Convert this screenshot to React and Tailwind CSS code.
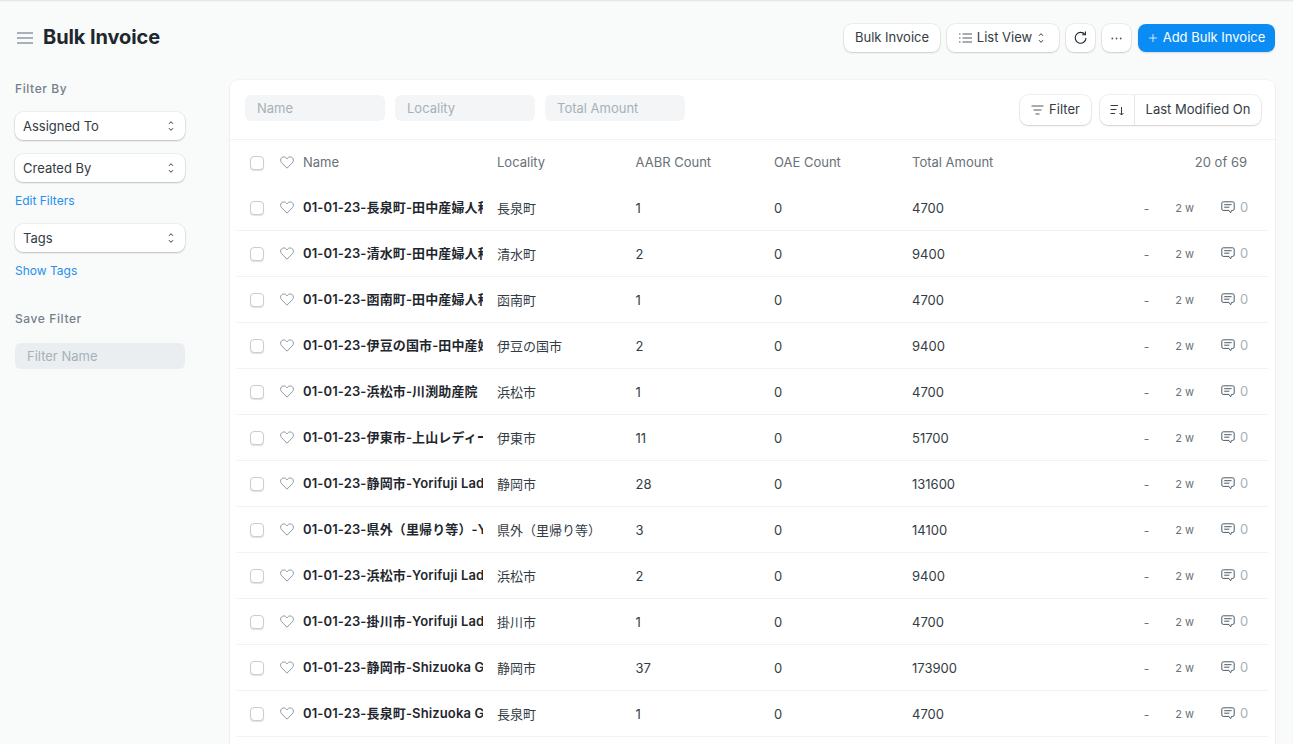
import React from "react";

const rows = [
  ["01-01-23-長泉町-田中産婦人科", "長泉町", "1", "4700"],
  ["01-01-23-清水町-田中産婦人科", "清水町", "2", "9400"],
  ["01-01-23-函南町-田中産婦人科", "函南町", "1", "4700"],
  ["01-01-23-伊豆の国市-田中産婦", "伊豆の国市", "2", "9400"],
  ["01-01-23-浜松市-川渕助産院", "浜松市", "1", "4700"],
  ["01-01-23-伊東市-上山レディー", "伊東市", "11", "51700"],
  ["01-01-23-静岡市-Yorifuji Ladi", "静岡市", "28", "131600"],
  ["01-01-23-県外（里帰り等）-Yo", "県外（里帰り等）", "3", "14100"],
  ["01-01-23-浜松市-Yorifuji Ladi", "浜松市", "2", "9400"],
  ["01-01-23-掛川市-Yorifuji Ladi", "掛川市", "1", "4700"],
  ["01-01-23-静岡市-Shizuoka Ge", "静岡市", "37", "173900"],
  ["01-01-23-長泉町-Shizuoka Ge", "長泉町", "1", "4700"],
];

const Updown = ({ className = "" }) => (
  <svg width="8" height="14" viewBox="0 0 8 14" fill="none" stroke="#333c44" strokeWidth="1" className={className}>
    <path d="M2 4.8 L4 2.7 L6 4.8" />
    <path d="M2 9.2 L4 11.3 L6 9.2" />
  </svg>
);

const Heart = () => (
  <svg width="14" height="13" viewBox="0 0 14 13" fill="none" stroke="#8d99a6" strokeWidth="1" className="shrink-0 block">
    <path d="M7 12.2 L1.7 6.8 C0.2 5.2 0.3 3 1.6 1.8 C3 0.5 5.3 0.7 6.3 2 L7 2.9 L7.7 2 C8.7 0.7 11 0.5 12.4 1.8 C13.7 3 13.8 5.2 12.3 6.8 Z" strokeLinejoin="round" />
  </svg>
);

const Checkbox = () => (
  <span className="w-[14px] h-[14px] rounded-[4px] bg-white border border-[#c8ced4] shadow-[0_1px_1px_rgba(0,0,0,0.12)] shrink-0 block" />
);

const Comment = () => (
  <svg width="14" height="13" viewBox="0 0 14 13" fill="none" stroke="#4c5a67" strokeWidth="1" className="shrink-0 block">
    <path d="M2.2 0.8 H11.8 C12.6 0.8 13.2 1.4 13.2 2.2 V8 C13.2 8.8 12.6 9.4 11.8 9.4 H10.6 L9.6 11.8 L8 9.4 H2.2 C1.4 9.4 0.8 8.8 0.8 8 V2.2 C0.8 1.4 1.4 0.8 2.2 0.8 Z" strokeLinejoin="round" />
    <path d="M3.6 3.7 H10.2 M3.6 6.2 H8" strokeLinecap="round" />
  </svg>
);

const Select = ({ label }) => (
  <div className="h-[28px] w-full bg-white rounded-lg shadow-[0_0_0_0.5px_rgba(0,0,0,0.09),0_1px_2px_rgba(0,0,0,0.2)] flex items-center justify-between pl-[8px] pr-[10px] text-[13px] text-[#333c44]">
    <span className="mt-[1px]">{label}</span>
    <Updown />
  </div>
);

const Button = ({ children, className = "" }) => (
  <div className={`bg-white rounded-lg shadow-[0_0_0_0.5px_rgba(0,0,0,0.1),0_1px_2px_rgba(0,0,0,0.14)] flex items-center justify-center text-[13px] text-[#333c44] ${className}`}>
    {children}
  </div>
);

const Input = ({ label, className = "" }) => (
  <div className={`h-[26px] rounded-md flex items-center px-[12px] text-[13px] text-[#a6b1b9] ${className}`}>
    <span className="mt-[1px]">{label}</span>
  </div>
);

export default function App() {
  return (
    <div className="h-screen overflow-hidden flex flex-col bg-[#f9fafa] shadow-[inset_0_2px_2px_-1px_rgba(0,0,0,0.1)]" style={{ fontFamily: '"Inter", "Noto Sans CJK JP", sans-serif' }}>
      <header className="h-[80px] shrink-0 flex items-start justify-between pl-[17px] pr-[18px] pt-[24px]">
        <div className="flex items-center gap-[10px] h-[26px]">
          <svg width="16" height="12" viewBox="0 0 16 12" stroke="#8d99a6" strokeWidth="1.5" fill="none" className="mt-[1px]">
            <path d="M0 1 H16 M0 6 H16 M0 11 H16" />
          </svg>
          <h1 className="text-[20px] font-bold text-[#1f272e] tracking-[-0.1px]">Bulk Invoice</h1>
        </div>
        <div className="flex items-center gap-[7px]">
          <Button className="h-[28px] w-[96px]">Bulk Invoice</Button>
          <Button className="h-[28px] w-[112px] gap-[5px] pr-[2px]">
            <svg width="13" height="10" viewBox="0 0 13 10" stroke="#4c5a67" strokeWidth="1" fill="none">
              <path d="M3.5 1 H13 M3.5 5 H13 M3.5 9 H13 M0 1 H1.5 M0 5 H1.5 M0 9 H1.5" />
            </svg>
            <span>List View</span>
            <Updown />
          </Button>
          <Button className="h-[28px] w-[29px]">
            <svg width="13" height="14" viewBox="0 0 13 14" stroke="#1f272e" strokeWidth="1.1" fill="none">
              <path d="M10.8 3.4 A5.4 5.4 0 1 0 12 7" />
              <path d="M11.4 0.6 V3.8 H8.2" />
            </svg>
          </Button>
          <Button className="h-[28px] w-[29px]">
            <svg width="11" height="3" viewBox="0 0 11 3" fill="#4c5a67">
              <circle cx="1.3" cy="1.5" r="0.9" />
              <circle cx="5.5" cy="1.5" r="0.9" />
              <circle cx="9.7" cy="1.5" r="0.9" />
            </svg>
          </Button>
          <div className="h-[28px] w-[137px] bg-[#0b8cf5] rounded-lg flex items-center justify-center gap-[5px] text-[13px] text-white shadow-[0_1px_2px_rgba(0,0,0,0.14)]">
            <svg width="10" height="10" viewBox="0 0 10 10" stroke="#ffffff" strokeWidth="1" strokeOpacity="0.8" fill="none">
              <path d="M5 1 V9 M1 5 H9" />
            </svg>
            <span>Add Bulk Invoice</span>
          </div>
        </div>
      </header>

      <div className="flex flex-1 min-h-0 pr-[18px]">
        <aside className="w-[230px] shrink-0 pl-[15px] pr-[45px]">
          <div className="text-[12px] font-medium text-[#74808b] tracking-[0.05em] mt-[1px] h-[15px] leading-[15px]">Filter By</div>
          <div className="mt-[16px]"><Select label="Assigned To" /></div>
          <div className="mt-[14px]"><Select label="Created By" /></div>
          <div className="mt-[11px] text-[12px] leading-[15px] text-[#2490ef]">Edit Filters</div>
          <div className="mt-[16px]"><Select label="Tags" /></div>
          <div className="mt-[11px] text-[12px] leading-[15px] text-[#2490ef]">Show Tags</div>
          <div className="mt-[33px] text-[12px] font-medium text-[#74808b] tracking-[0.05em] h-[15px] leading-[15px]">Save Filter</div>
          <Input label="Filter Name" className="mt-[17px] bg-[#ebeef0]" />
        </aside>

        <main className="flex-1 bg-white rounded-t-lg shadow-[0_0_0_0.5px_rgba(0,0,0,0.05),0_1px_2px_rgba(0,0,0,0.08)] min-w-0">
          <div className="h-[60px] flex items-center justify-between pl-[15px] pr-[14px] border-b border-[#f0f2f4]">
            <div className="flex gap-[10px] -mt-[3px]">
              <Input label="Name" className="w-[140px] bg-[#f4f5f6]" />
              <Input label="Locality" className="w-[140px] bg-[#f4f5f6]" />
              <Input label="Total Amount" className="w-[140px] bg-[#f4f5f6]" />
            </div>
            <div className="flex gap-[9px]">
              <Button className="w-[71px] h-[30px] gap-[5px]">
                <svg width="13" height="10" viewBox="0 0 13 10" stroke="#4c5a67" strokeWidth="1" fill="none">
                  <path d="M0.5 1 H12.5 M2.5 5 H10.5 M4.5 9 H8.5" />
                </svg>
                <span>Filter</span>
              </Button>
              <Button className="w-[161px] h-[30px]">
                <span className="w-[35px] h-full flex items-center justify-center border-r border-[#e2e6e9]">
                  <svg width="15" height="12" viewBox="0 0 15 12" stroke="#333c44" strokeWidth="1" fill="none">
                    <path d="M0.5 1.5 H8 M0.5 5.5 H6.5 M0.5 9.5 H5" />
                    <path d="M11.5 3 V11 M9.5 9 L11.5 11 L13.5 9" />
                  </svg>
                </span>
                <span className="flex-1 text-center">Last Modified On</span>
              </Button>
            </div>
          </div>

          <div className="px-[7px]">
            <div className="h-[45px] flex items-center pl-[13px] pr-[21px] text-[13px] text-[#687178]">
              <Checkbox />
              <span className="ml-[16px]"><Heart /></span>
              <span className="ml-[9px] w-[194px]">Name</span>
              <span className="w-[138.5px]">Locality</span>
              <span className="w-[138.5px]">AABR Count</span>
              <span className="w-[138px]">OAE Count</span>
              <span className="w-[120px]">Total Amount</span>
              <span className="flex-1 text-right">20 of 69</span>
            </div>
            {rows.map((r, i) => (
              <div key={i} className="h-[46px] flex items-center pl-[13px] pr-[21px] border-b border-[#f0f2f4] text-[13px] text-[#333c44]">
                <Checkbox />
                <span className="ml-[16px]"><Heart /></span>
                <span className="ml-[9px] w-[180px] mr-[14px] overflow-hidden whitespace-nowrap font-semibold text-[#1f272e] tracking-[0.13px]">{r[0]}</span>
                <span className="w-[138.5px] mt-[2px]">{r[1]}</span>
                <span className="w-[138.5px] mt-[2px]">{r[2]}</span>
                <span className="w-[138px] mt-[2px]">0</span>
                <span className="w-[120px] mt-[2px]">{r[3]}</span>
                <div className="flex-1 flex items-center justify-end text-[#687178]">
                  <span className="text-[12px] mt-[2px]">-</span>
                  <span className="ml-[26px] text-[11px] mt-[2px]">2 w</span>
                  <span className="ml-[27px]"><Comment /></span>
                  <span className="ml-[5px] w-[7px] text-[#a6b1b9]">0</span>
                </div>
              </div>
            ))}
          </div>
        </main>
      </div>
    </div>
  );
}
